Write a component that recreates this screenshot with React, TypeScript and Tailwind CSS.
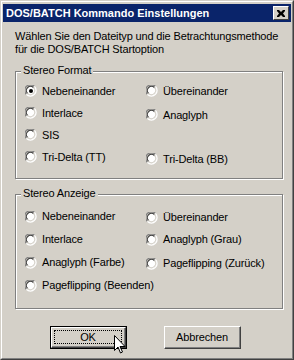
import React from "react";

const face = "bg-[#d4d0c8]";

function Radio({ checked }: { checked?: boolean }) {
  return (
    <svg width="12" height="12" viewBox="0 0 12 12" className="shrink-0">
      <path d="M1.4 9.4 A5.2 5.2 0 0 1 9.4 1.4" fill="none" stroke="#808080" strokeWidth="1.3" />
      <path d="M9.4 1.4 A5.2 5.2 0 0 1 1.4 9.4" fill="none" stroke="#ffffff" strokeWidth="1.3" />
      <circle cx="6" cy="6" r="4.2" fill="#ffffff" />
      <path d="M2.6 8.4 A4 4 0 0 1 8.4 2.6" fill="none" stroke="#404040" strokeWidth="1.1" />
      <path d="M8.4 2.6 A4 4 0 0 1 2.6 8.4" fill="none" stroke="#d4d0c8" strokeWidth="1.1" />
      {checked && <circle cx="6" cy="6" r="2" fill="#000000" />}
    </svg>
  );
}

function Option({ label, checked, className = "" }: { label: string; checked?: boolean; className?: string }) {
  return (
    <div className={`flex items-center gap-[5px] whitespace-nowrap ${className}`}>
      <Radio checked={checked} />
      <span>{label}</span>
    </div>
  );
}

function Group({ title, children, className = "" }: { title: string; children: React.ReactNode; className?: string }) {
  return (
    <div className={`relative border border-[#808080] shadow-[inset_1px_1px_0_#ffffff,1px_1px_0_#ffffff] ${className}`}>
      <span className={`absolute left-[5px] top-[-8px] ${face} px-[2px] leading-[13px]`}>{title}</span>
      {children}
    </div>
  );
}

export default function App() {
  return (
    <div
      className={`relative w-[294px] h-[360px] ${face} text-[11px] tracking-[-0.15px] text-black border-t border-l border-t-[#d4d0c8] border-l-[#d4d0c8] border-r border-b border-r-[#404040] border-b-[#404040] overflow-hidden`}
      style={{ fontFamily: '"Liberation Sans", Arial, sans-serif' }}
    >
      <div className="h-full border-t border-l border-t-white border-l-white border-r border-b border-r-[#808080] border-b-[#808080] p-px flex flex-col">
        {/* title bar */}
        <div className="h-[18px] mt-px bg-[#0a246a] flex items-center justify-between pl-[3px] pr-[2px]">
          <span className="text-white font-bold text-[11px] tracking-normal leading-none">DOS/BATCH Kommando Einstellungen</span>
          <div className="w-[16px] h-[14px] bg-[#d4d0c8] border-t border-l border-t-white border-l-white border-r border-b border-r-[#404040] border-b-[#404040] flex items-center justify-center">
            <svg width="8" height="7" viewBox="0 0 8 7">
              <path d="M0 0h2l2 2 2-2h2v1L6 3.5 8 6v1H6L4 5 2 7H0V6l2-2.5L0 1z" fill="#000" />
            </svg>
          </div>
        </div>

        {/* body */}
        <div className="flex-1 pl-[12px] pr-[8px] pt-[8px]">
          <p className="leading-[13px] whitespace-nowrap">
            Wählen Sie den Dateityp und die Betrachtungsmethode
            <br />
            für die DOS/BATCH Startoption
          </p>

          <Group title="Stereo Format" className="mt-[15px] h-[108px] pt-[8px] pl-[9px]">
            <div className="grid grid-cols-[121px_1fr] auto-rows-[22px] items-center">
              <Option label="Nebeneinander" checked />
              <Option label="Übereinander" />
              <Option label="Interlace" />
              <Option label="Anaglyph" className="mt-[4px]" />
              <Option label="SIS" />
              <div />
              <Option label="Tri-Delta (TT)" />
              <Option label="Tri-Delta (BB)" className="mt-[4px]" />
            </div>
          </Group>

          <Group title="Stereo Anzeige" className="mt-[15px] h-[115px] pt-[10px] pl-[9px]">
            <div className="grid grid-cols-[121px_1fr] auto-rows-[23px] items-center">
              <Option label="Nebeneinander" />
              <Option label="Übereinander" className="mt-[2px]" />
              <Option label="Interlace" />
              <Option label="Anaglyph (Grau)" />
              <Option label="Anaglyph (Farbe)" />
              <Option label="Pageflipping (Zurück)" className="mt-[2px]" />
              <Option label="Pageflipping (Beenden)" className="col-span-2" />
            </div>
          </Group>

          <div className="flex mt-[17px] pl-[35px] gap-[37px]">
            <div className="w-[77px] h-[23px] border border-black">
              <div className="h-full border-t border-l border-t-white border-l-white border-r border-b border-r-[#404040] border-b-[#404040]">
                <div className="h-full border-r border-b border-r-[#808080] border-b-[#808080] p-[2px]">
                  <div className="h-full border border-dotted border-black flex items-center justify-center leading-none">
                    OK
                  </div>
                </div>
              </div>
            </div>
            <div className="w-[77px] h-[23px] border-t border-l border-t-white border-l-white border-r border-b border-r-[#404040] border-b-[#404040]">
              <div className="h-full border-r border-b border-r-[#808080] border-b-[#808080] flex items-center justify-center leading-none">
                Abbrechen
              </div>
            </div>
          </div>
        </div>
      </div>

      {/* mouse pointer */}
      <svg className="absolute left-[113px] top-[334px]" width="12" height="20" viewBox="0 0 12 20">
        <path d="M0.5 0.5v15l3.5-3.5 2.5 6 2-1-2.5-5.5h5z" fill="#fff" stroke="#000" strokeWidth="1" strokeLinejoin="miter" />
      </svg>
    </div>
  );
}
